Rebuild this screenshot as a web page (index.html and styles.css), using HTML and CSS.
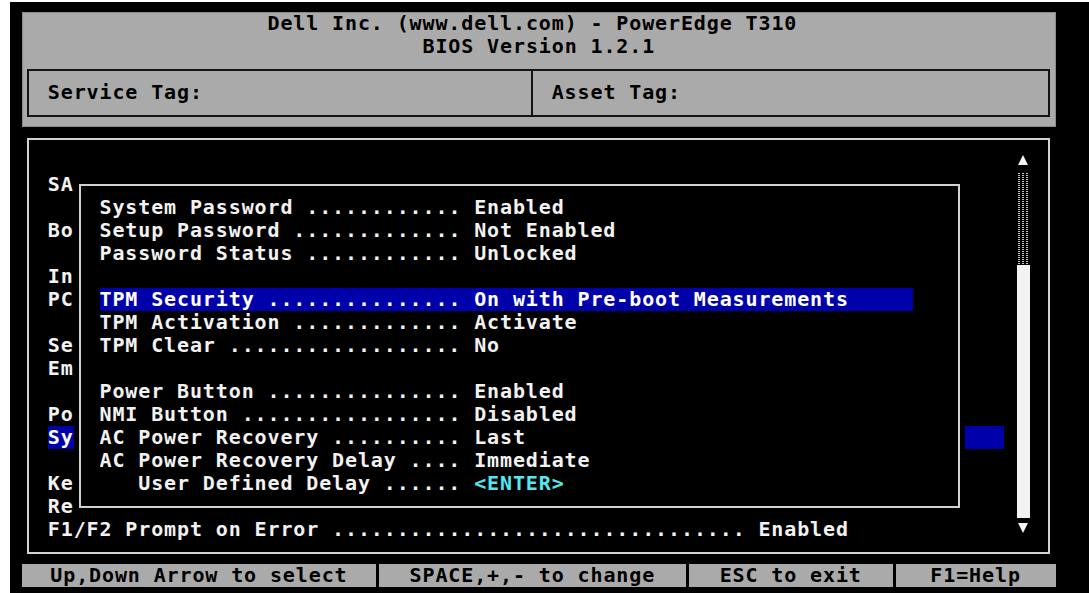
FILE: index.html
```html
<!DOCTYPE html>
<html lang="en">
<head>
<meta charset="utf-8">
<title>PowerEdge T310 BIOS Setup</title>
<link rel="stylesheet" href="styles.css">
</head>
<body>
<div class="screen">
  <div class="term">
    <header class="banner">
      <div class="line title">Dell Inc. (www.dell.com) - PowerEdge T310</div>
      <div class="line version">BIOS Version 1.2.1</div>
      <div class="tags">
        <div class="tag">Service Tag:</div>
        <div class="tag">Asset Tag:</div>
      </div>
    </header>

    <main class="frame">
      <!-- the list behind the open submenu: only the cells left of its border remain on screen -->
      <div class="menu">
        <div class="row"></div>
        <div class="row">SA</div>
        <div class="row"></div>
        <div class="row">Bo</div>
        <div class="row"></div>
        <div class="row">In</div>
        <div class="row">PC</div>
        <div class="row"></div>
        <div class="row">Se</div>
        <div class="row">Em</div>
        <div class="row"></div>
        <div class="row">Po</div>
        <div class="row"><span class="current">Sy</span></div>
        <div class="row"></div>
        <div class="row">Ke</div>
        <div class="row">Re</div>
        <div class="item wide"><span class="key">F1/F2 Prompt on Error</span><span class="val">Enabled</span></div>
      </div>

      <div class="scrollbar">
        <div class="arrow"><svg width="10" height="10" viewBox="0 0 10 10"><path d="M5 0 L10 10 L0 10 Z"/></svg></div>
        <div class="track"></div>
        <div class="thumb"></div>
        <div class="arrow"><svg width="10" height="10" viewBox="0 0 10 10"><path d="M0 0 L10 0 L5 10 Z"/></svg></div>
      </div>
    </main>

    <section class="popup">
      <div class="popup-box">
        <div class="item"><span class="key">System Password</span><span class="val">Enabled</span></div>
        <div class="item"><span class="key">Setup Password</span><span class="val">Not Enabled</span></div>
        <div class="item"><span class="key">Password Status</span><span class="val">Unlocked</span></div>
        <div class="row"></div>
        <div class="item sel"><span class="key">TPM Security</span><span class="val">On with Pre-boot Measurements</span></div>
        <div class="item"><span class="key">TPM Activation</span><span class="val">Activate</span></div>
        <div class="item"><span class="key">TPM Clear</span><span class="val">No</span></div>
        <div class="row"></div>
        <div class="item"><span class="key">Power Button</span><span class="val">Enabled</span></div>
        <div class="item"><span class="key">NMI Button</span><span class="val">Disabled</span></div>
        <div class="item"><span class="key">AC Power Recovery</span><span class="val">Last</span></div>
        <div class="item"><span class="key">AC Power Recovery Delay</span><span class="val">Immediate</span></div>
        <div class="item"><span class="key sub">User Defined Delay</span><span class="val action">&lt;ENTER&gt;</span></div>
      </div>
    </section>

    <footer class="status">
      <span>Up,Down Arrow to select</span>
      <span>SPACE,+,- to change</span>
      <span>ESC to exit</span>
      <span>F1=Help</span>
    </footer>
  </div>
</div>
</body>
</html>
```

FILE: styles.css
```css
/* 80x25 text-mode console: every cell is one --cw wide and one --rh tall */
:root {
  --cw: 12.92px;
  --rh: 23px;
  --gray: #aaaaaa;
  --blue: #0000aa;
  --line: #d2d2d2;
  --ink: #f2f2f2;
}

* { box-sizing: border-box; }

html, body {
  margin: 0;
  background: #ffffff;
}

body {
  font-family: "DejaVu Sans Mono", monospace;
  font-weight: bold;
  font-size: 20px;
  line-height: var(--rh);
  letter-spacing: 0.88px;
}

.screen {
  margin: 2px 0 0 10px;
  width: 1079px;
  height: 591px;
  background: #000;
  padding: 10px 0 0 12px;
  overflow: hidden;
}

.term {
  position: relative;
  width: calc(80 * var(--cw));
  color: var(--ink);
}

/* ---- gray banner (rows 0-4) ---- */
.banner {
  height: calc(5 * var(--rh));
  background: var(--gray);
  color: #000;
  box-shadow: inset 0 0 0 1px #8a8a8a;
}

.line {
  height: var(--rh);
  white-space: pre;
}

.title { padding-left: calc(19 * var(--cw)); }
.version { padding-left: calc(31 * var(--cw)); }

.tags {
  display: grid;
  grid-template-columns: calc(39 * var(--cw)) 1fr;
  margin: 10.5px 0 0 calc(0.5 * var(--cw) - 1px);
  width: calc(79 * var(--cw) + 2px);
  height: 48px;
  border: 2px solid #141414;
}

.tag {
  padding: 10.5px 0 0 calc(1.5 * var(--cw) - 1px);
  white-space: pre;
}

.tag:first-child { border-right: 2px solid #141414; }

/* ---- main menu frame (rows 5-23) ---- */
.frame {
  display: grid;
  grid-template-columns: calc(75 * var(--cw)) var(--cw);
  margin: 10.5px 0 0 calc(0.5 * var(--cw) - 1px);
  width: calc(79 * var(--cw) + 2px);
  height: 416px;
  border: 2px solid var(--line);
  padding: 10.5px 0 0 calc(1.5 * var(--cw) - 1px);
}

.row {
  height: var(--rh);
  white-space: pre;
}

/* selected entry: the bar runs on under the submenu to column 75 */
.current {
  display: inline-block;
  width: calc(74 * var(--cw));
  background: var(--blue);
  color: #fff;
}

/* label .......... value */
.item {
  display: grid;
  grid-template-columns: calc(28 * var(--cw)) auto;
  column-gap: var(--cw);
  height: var(--rh);
  white-space: pre;
}

.item.wide { grid-template-columns: calc(54 * var(--cw)) auto; }

.key { overflow: hidden; }
.key::after { content: " ................................................................"; }
.key.sub { padding-left: calc(3 * var(--cw)); }

.item.sel {
  width: calc(63 * var(--cw));
  background: var(--blue);
  color: #fff;
}

.val.action { color: #55e6ef; }

/* ---- scrollbar column ---- */
.scrollbar {
  display: flex;
  flex-direction: column;
}

.arrow {
  height: var(--rh);
  padding: 5px 0 0 1px;
  line-height: 0;
}

.arrow svg { fill: #f4f4f4; }

.track {
  height: calc(4 * var(--rh));
  margin-right: 1px;
  background:
    repeating-linear-gradient(to bottom, transparent 0 1px, #000 1px 2px),
    repeating-linear-gradient(to right, #000 0 1px, #c4c4c4 1px 3px, #000 3px 4px);
}

.thumb {
  height: calc(11 * var(--rh));
  background: #f2f2f2;
}

/* ---- popup submenu over the list (rows 7-21, cols 4-72) ---- */
.popup {
  position: absolute;
  top: calc(7 * var(--rh));
  left: calc(4 * var(--cw));
  width: calc(69 * var(--cw));
  height: calc(15 * var(--rh));
  background: #000;
  padding: 10.5px calc(0.5 * var(--cw) - 1px);
}

.popup-box {
  height: 100%;
  border: 2px solid var(--line);
  padding: 10.5px 0 0 calc(1.5 * var(--cw) - 1px);
}

/* ---- key help bar (row 24) ---- */
.status {
  display: grid;
  grid-template-columns:
    calc(27.5 * var(--cw) - 1.5px)
    calc(24 * var(--cw) - 3px)
    calc(16 * var(--cw) - 3px)
    1fr;
  column-gap: 3px;
  height: var(--rh);
  margin-top: 10.5px;
}

.status span {
  background: var(--gray);
  color: #000;
  text-align: center;
  white-space: pre;
}
```
